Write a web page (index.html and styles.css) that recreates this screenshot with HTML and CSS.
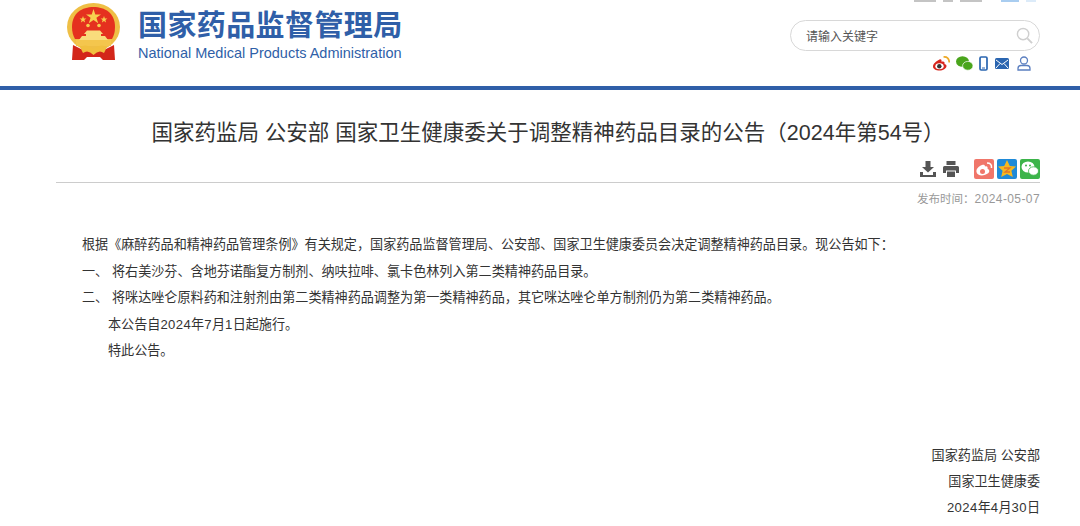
FILE: index.html
```html
<!DOCTYPE html>
<html lang="zh-CN">
<head>
    <meta charset="UTF-8">
    <title>国家药监局 公安部 国家卫生健康委关于调整精神药品目录的公告（2024年第54号）</title>
    <link rel="stylesheet" href="styles.css">
</head>
<body>

<div class="header">
    <!-- top nav row is cut off by the window edge, only slivers show -->
    <div class="top-strip">
        <span class="sliver grey wide"></span>
        <span class="sliver grey"></span>
        <span class="sliver grey wide"></span>
        <span class="sliver blue"></span>
        <span class="sliver pale"></span>
    </div>
    <div class="header-inner">
        <svg class="emblem" viewBox="0 0 54 58">
            <ellipse cx="26.500" cy="24" rx="26.500" ry="24" fill="#efbf45"/>
            <path d="M5 24 C5 10 15 4 26.500 4 S48 10 48 24 C48 29 47 32 45 36 H8 C6 32 5 29 5 24 Z" fill="#e5311f"/>
            <polygon points="26.500,6 28.300,11.500 34,11.500 29.400,14.800 31.200,20.300 26.500,17 21.800,20.300 23.600,14.800 19,11.500 24.700,11.500" fill="#f7d04f"/>
            <polygon points="16,13 16.900,15.400 19.400,15.400 17.400,17 18.100,19.400 16,18 13.900,19.400 14.600,17 12.600,15.400 15.100,15.400" fill="#f7d04f"/>
            <polygon points="37,13 37.900,15.400 40.400,15.400 38.400,17 39.100,19.400 37,18 34.900,19.400 35.600,17 33.600,15.400 36.100,15.400" fill="#f7d04f"/>
            <circle cx="21" cy="22.500" r="1.800" fill="#f7d04f"/>
            <circle cx="32" cy="22.500" r="1.800" fill="#f7d04f"/>
            <path d="M17 31 L20 27.500 H33 L36 31 H34 V33 H38 L41 37 H12 L15 33 H19 V31 Z" fill="#f9dc7c"/>
            <rect x="9" y="37" width="35" height="6" fill="#f4c64d"/>
            <path d="M6 42 L14 46 H39 L47 42 L48 57 H36 L33 54 H20 L17 57 H5 Z" fill="#d3261a"/>
            <path d="M13 44 Q19 40 26.500 46 Q34 40 40 44 L37 50 Q32 46 26.500 52 Q21 46 16 50 Z" fill="#f1c040"/>
        </svg>
        <div class="brand">
            <div class="brand-cn">国家药品监督管理局</div>
            <div class="brand-en">National Medical Products Administration</div>
        </div>
        <div class="tools">
            <div class="search">
                <span class="search-text">请输入关键字</span>
                <svg class="search-icon" viewBox="0 0 18 18" fill="none" stroke="#cfcfcf" stroke-width="1.500">
                    <circle cx="7.500" cy="7.500" r="6"/>
                    <line x1="12" y1="12" x2="17" y2="17" stroke-width="2"/>
                </svg>
            </div>
            <div class="quick-links">
                <svg class="icon-weibo" viewBox="0 0 17 15"><path d="M6.500 3.500C3 5 0 8 0 10.500 0 13 3 14.500 6.500 14.500S13.500 12.500 13.500 10C13.500 8.500 12 8.200 11.500 8 12 6.300 11 4.700 8.500 5.800 8.800 3.800 8 3 6.500 3.500Z" fill="#d7261e"/><ellipse cx="6.500" cy="10.300" rx="4.200" ry="3" fill="#fff"/><circle cx="6.300" cy="10.300" r="2.200" fill="#333"/><path d="M10.500 1Q16 .5 16.300 6.500" fill="none" stroke="#eea825" stroke-width="1.700"/></svg>
                <svg class="icon-wechat" viewBox="0 0 17 15"><ellipse cx="6.500" cy="5.500" rx="6.500" ry="5.300" fill="#4aa51c"/><ellipse cx="11.800" cy="9.800" rx="5.200" ry="4.400" fill="#4aa51c" stroke="#fff" stroke-width=".7"/></svg>
                <svg class="icon-phone" viewBox="0 0 9 15"><rect x="1" y="1" width="7" height="13" rx="1.200" fill="none" stroke="#2a65b0" stroke-width="1.700"/><line x1="3" y1="12" x2="6" y2="12" stroke="#2a65b0"/></svg>
                <svg class="icon-mail" viewBox="0 0 14 11"><rect width="14" height="11" rx="1.500" fill="#2a65b0"/><path d="M1 2L7 6.500 13 2M1 10L5 5.500M13 10L9 5.500" fill="none" stroke="#fff"/></svg>
                <svg class="icon-user" viewBox="0 0 14 15" fill="none" stroke="#5b7fc0" stroke-width="1.300"><circle cx="7" cy="4.500" r="3.500"/><path d="M1 14V12.500Q1 9.500 4 9.500H10Q13 9.500 13 12.500V14Z"/></svg>
            </div>
        </div>
    </div>
</div>

<div class="article">
    <h1>国家药监局 公安部 国家卫生健康委关于调整精神药品目录的公告（2024年第54号）</h1>
    <div class="share-bar">
        <svg class="tool-icon" viewBox="0 0 16 16" fill="#555"><path d="M5.500 0H10.500V6H14L8 11.500 2 6H5.500Z"/><path d="M0 11H3V14H13V11H16V16H0Z"/></svg>
        <svg class="tool-icon" viewBox="0 0 16 16" fill="#555"><path d="M3.500 0H12.500V4H3.500Z"/><path d="M1.500 5H14.500Q16 5 16 6.500V12H13V9.500H3V12H0V6.500Q0 5 1.500 5Z"/><rect x="4" y="10.500" width="8" height="5.500"/></svg>
        <span class="share-btn weibo">
            <svg viewBox="0 0 20 20"><path d="M8 6C4.500 7.500 2 10 2.500 13 3 16 7 17 10.500 16S16 13 15 11C14.500 10 13.500 10 13.500 9.500 14 8 13 6.500 11 7.500 11 6 10 5.500 8 6Z" fill="#fff"/><circle cx="8.500" cy="12.500" r="2.500" fill="#f0766a"/><path d="M13 4Q18 4 17.500 9" fill="none" stroke="#fff" stroke-width="1.500"/></svg>
        </span>
        <span class="share-btn qzone">
            <svg viewBox="0 0 20 20"><polygon points="10,1 12.800,7 19,7.600 14.400,11.800 15.800,18 10,15 4.200,18 5.600,11.800 1,7.600 7.200,7" fill="#f6b81f"/><path d="M7 9H13L8 13H13" fill="none" stroke="#e2762a" stroke-width="1.300"/></svg>
        </span>
        <span class="share-btn wechat">
            <svg viewBox="0 0 20 20"><ellipse cx="8" cy="8" rx="6.500" ry="5.500" fill="#fff"/><ellipse cx="13.500" cy="12" rx="5" ry="4.200" fill="#fff" stroke="#3cb44a" stroke-width=".8"/><circle cx="6" cy="6.500" r="1" fill="#3cb44a"/><circle cx="10" cy="6.500" r="1" fill="#3cb44a"/></svg>
        </span>
    </div>
    <div class="publish-date"><span class="date-label">发布时间：</span><span class="digits">2024-05-07</span></div>

    <div class="content">
        <p>根据《麻醉药品和精神药品管理条例》有关规定，国家药品监督管理局、公安部、国家卫生健康委员会决定调整精神药品目录。现公告如下：</p>
        <p><span class="num">一、</span>将右美沙芬、含地芬诺酯复方制剂、纳呋拉啡、氯卡色林列入第二类精神药品目录。</p>
        <p><span class="num">二、</span>将咪达唑仑原料药和注射剂由第二类精神药品调整为第一类精神药品，其它咪达唑仑单方制剂仍为第二类精神药品。</p>
        <p class="indent">本公告自<span class="digits">2024</span>年<span class="digits">7</span>月<span class="digits">1</span>日起施行。</p>
        <p class="indent">特此公告。</p>
    </div>

    <div class="signature">
        <p>国家药监局 公安部</p>
        <p>国家卫生健康委</p>
        <p><span class="digits">2024</span>年<span class="digits">4</span>月<span class="digits">30</span>日</p>
    </div>
</div>

</body>
</html>
```

FILE: styles.css
```css
html, body {
    height: 526px;
    overflow: hidden;
}

body {
    margin: 0;
    background-color: #fff;
    color: #333;
    font-family: "Liberation Sans", "Noto Sans CJK SC", sans-serif;
}

.digits {
    letter-spacing: 0.4px;
}

.header {
    height: 86px;
    border-bottom: 4px solid #2f5fa8;
    position: relative;
}

.top-strip {
    position: absolute;
    top: 0;
    right: 44px;
    display: flex;
    gap: 7px;
}

.sliver {
    display: block;
    width: 10px;
    height: 2px;
}

.sliver.wide {
    width: 22px;
}

.sliver.grey {
    background-color: #c4c4c4;
}

.sliver.blue {
    width: 18px;
    margin-left: 12px;
    background-color: #a9cdf0;
}

.sliver.pale {
    background-color: #dcebf9;
}

.header-inner {
    display: flex;
    align-items: flex-start;
    padding: 3px 40px 0 67px;
}

.emblem {
    width: 54px;
    height: 58px;
    flex-shrink: 0;
}

.brand {
    margin-left: 17px;
    padding-top: 5px;
    color: #2f5fa8;
}

.brand-cn {
    font-size: 29px;
    line-height: 36px;
    font-weight: bold;
    letter-spacing: 0.4px;
}

.brand-en {
    font-size: 14.500px;
    line-height: 18px;
}

.tools {
    margin-left: auto;
    padding-top: 17px;
    width: 250px;
}

.search {
    height: 29px;
    border: 1px solid #d8d8d8;
    border-radius: 16px;
    display: flex;
    align-items: center;
    justify-content: space-between;
    padding: 0 6px 0 15px;
}

.search-text {
    font-size: 12px;
    color: #555;
}

.search-icon {
    width: 17px;
    height: 17px;
}

.quick-links {
    display: flex;
    justify-content: flex-end;
    align-items: center;
    gap: 6px;
    margin-top: 5px;
    padding-right: 9px;
}

.quick-links svg {
    height: 15px;
}

.icon-weibo,
.icon-wechat {
    width: 17px;
}

.icon-phone {
    width: 9px;
}

.quick-links .icon-mail {
    width: 14px;
    height: 11px;
    margin-left: 1px;
}

.icon-user {
    width: 14px;
    margin-left: 2px;
}

.article {
    padding: 0 40px 0 56px;
}

h1 {
    margin: 27px 0 0;
    font-size: 21.500px;
    line-height: 32px;
    font-weight: normal;
    text-align: center;
    color: #333;
}

.share-bar {
    display: flex;
    justify-content: flex-end;
    align-items: center;
    height: 24px;
    margin-top: 8px;
    padding-bottom: 1px;
    border-bottom: 1px solid #ccc;
}

.tool-icon {
    width: 16px;
    height: 16px;
    margin-right: 7px;
}

.tool-icon + .share-btn {
    margin-left: 8px;
}

.share-btn {
    display: block;
    width: 20px;
    height: 20px;
    margin-left: 3px;
    border-radius: 2px;
}

.share-btn svg {
    display: block;
    width: 20px;
    height: 20px;
}

.weibo {
    background-color: #f0766a;
}

.qzone {
    background-color: #1f8ad8;
}

.wechat {
    background-color: #3cb44a;
}

.publish-date {
    margin-top: 7px;
    font-size: 12px;
    line-height: 18px;
    text-align: right;
    color: #999;
}

.date-label {
    font-size: 11.500px;
}

.content {
    margin-top: 24px;
    padding-left: 26px;
}

.content p {
    margin: 0;
    font-size: 13.100px;
    line-height: 26.500px;
}

.content .indent {
    padding-left: 26px;
}

.num {
    display: inline-block;
    width: 30px;
}

.signature {
    margin-top: 78px;
    text-align: right;
}

.signature p {
    margin: 0;
    font-size: 13.100px;
    line-height: 26px;
}
```
